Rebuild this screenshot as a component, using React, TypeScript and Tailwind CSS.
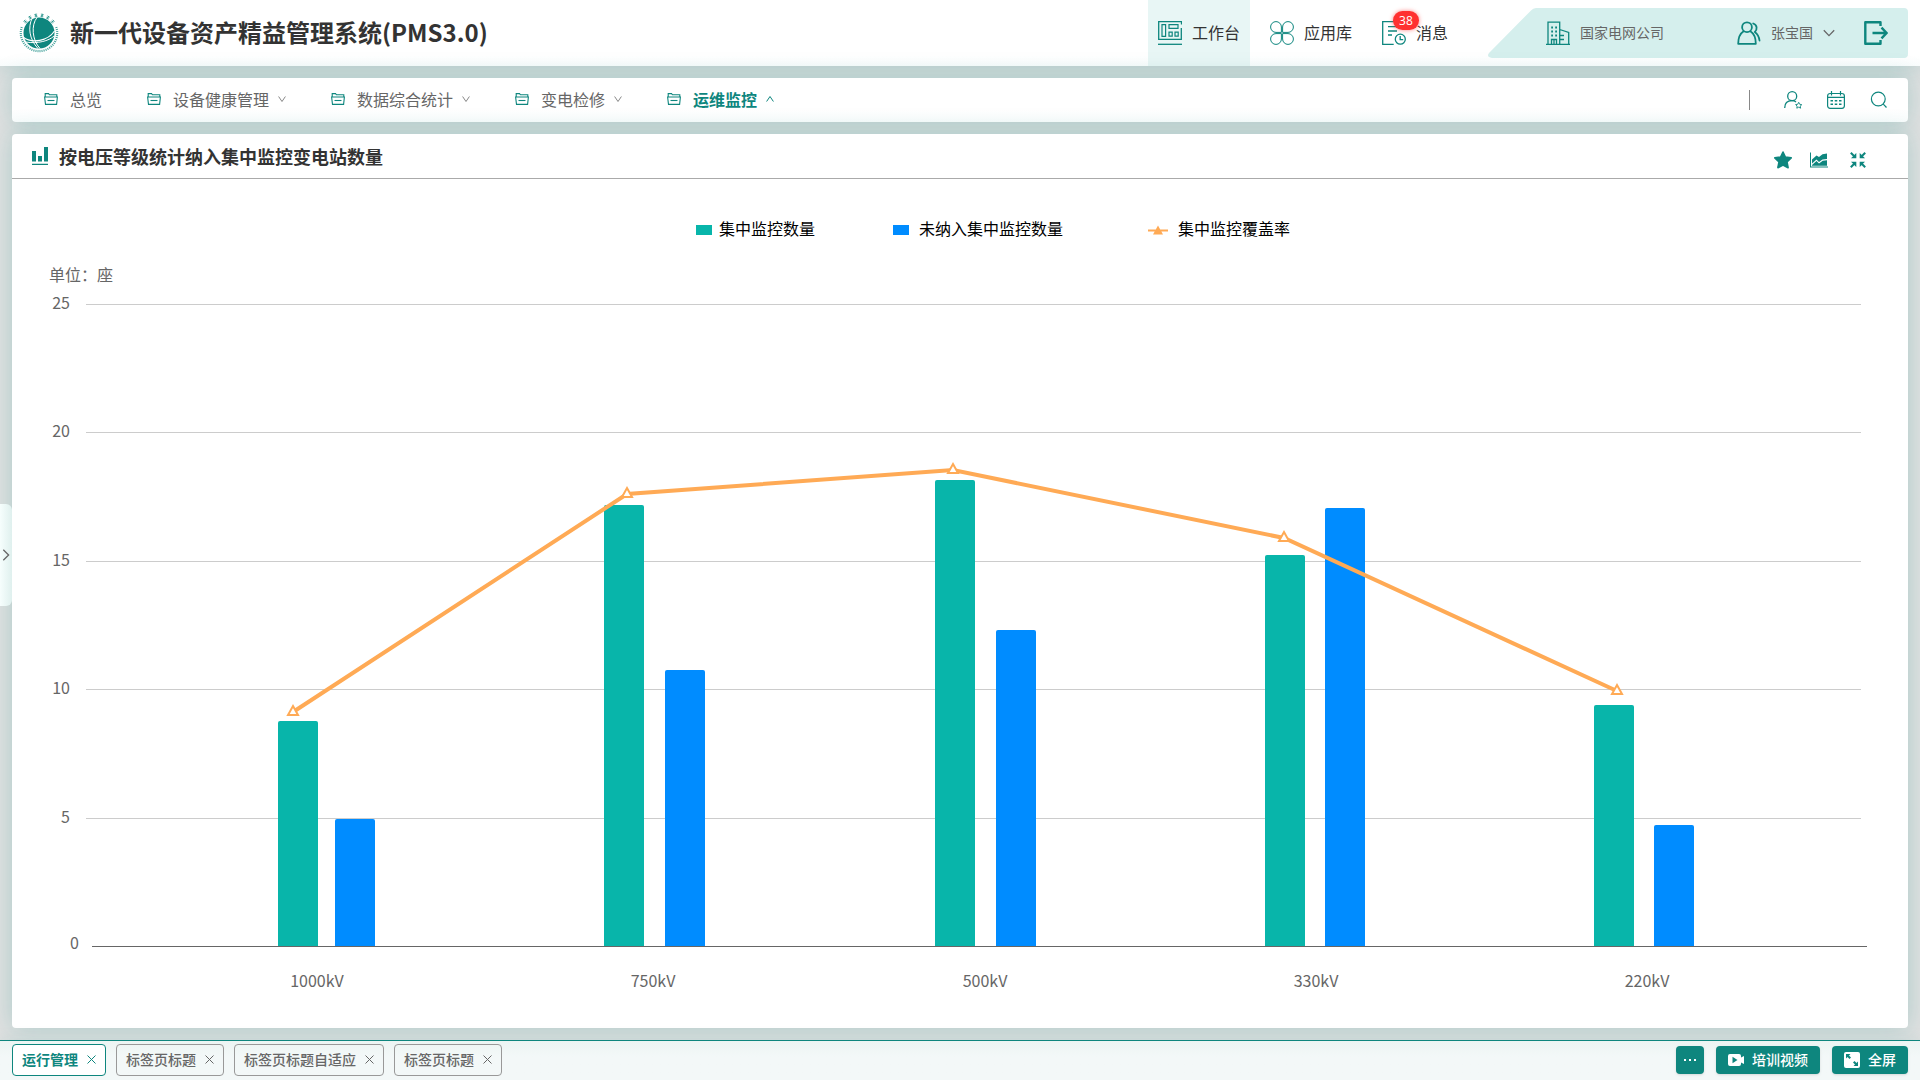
import type { ReactNode } from "react";

const TEAL = "#0e867e";

type IconProps = { className?: string };

function Logo() {
  const spokes = Array.from({ length: 6 }, (_, i) => (i - 2.5) * 20);
  return (
    <svg className="size-10" viewBox="0 0 40 40" fill="none" aria-hidden="true">
      {spokes.map((deg) => (
        <g key={deg} transform={`rotate(${deg} 20 20)`} stroke={TEAL}>
          <path d="M18.6 1h2.8M18.8 2.300h2.400M18.600 3.400h2.800M20 .600v3" strokeWidth="0.600" />
        </g>
      ))}
      <mask id="lower">
        <path d="M0 13L20 20 40 13V40H0Z" fill="#fff" />
      </mask>
      <circle cx="20" cy="20" r="18.200" stroke={TEAL} strokeWidth="2.200" strokeDasharray="1 1" pathLength="110" mask="url(#lower)" opacity="0.750" />
      <circle cx="20" cy="20" r="15.500" fill={TEAL} />
      <path d="M13 5.500C9 14 10 26 19 35.500" stroke="#fff" strokeWidth="1" />
      <path d="M18 4.500C12 12 13 27 21 35.500" stroke="#fff" strokeWidth="1" />
      <path d="M4 24C13 31 29 28 35.500 18" stroke="#fff" strokeWidth="1.100" />
      <path d="M7 29C18 31 30 28 35 23" stroke="#fff" strokeWidth="1" />
    </svg>
  );
}

function WorkbenchIcon() {
  return (
    <svg className="size-6" viewBox="0 0 24 24" fill="none" stroke={TEAL} aria-hidden="true">
      <path d="M23.5 3.5V.7H.7v17.6h22.6V7" strokeWidth="1.3" />
      <path d="M0 23.3h24" strokeWidth="1.3" />
      <path d="M4 3.7h3.6v11.6H4zM11 3.7h9v3.6h-9zM11 11.2h3.2v4H11zM17 11.2h3.2v4H17z" strokeWidth="1.2" />
    </svg>
  );
}

function AppsIcon() {
  return (
    <svg className="size-6" viewBox="0 0 24 24" fill="none" stroke={TEAL} strokeWidth="1" aria-hidden="true">
      <path d="M11.4 11.4H6a5.4 5.4 0 1 1 5.4-5.4ZM12.6 11.4H18A5.4 5.4 0 1 0 12.6 6ZM11.4 12.6H6a5.4 5.4 0 1 0 5.4 5.4ZM12.6 12.6H18a5.4 5.4 0 1 1-5.4 5.4Z" />
    </svg>
  );
}

function MessageIcon() {
  return (
    <svg className="size-6" viewBox="0 0 24 24" fill="none" stroke={TEAL} strokeWidth="1.3" aria-hidden="true">
      <path d="M20.4 8V.7H.7v22.6h11M6 5.7h10M6 10h9M6 14h4" />
      <circle cx="18.3" cy="18.2" r="5" />
      <path d="M18.2 15v3.6h3" />
    </svg>
  );
}

function BuildingIcon() {
  return (
    <svg className="size-6" viewBox="0 0 24 24" fill="none" stroke={TEAL} strokeWidth="1.3" aria-hidden="true">
      <path d="M0 23.3h24M2 23V1.2h11.7V23M13.7 8.5l9 3V23M5.5 23v-4.5h5V23M8 19v4" />
      <path d="M14 14.5h4M14 18.5h4" />
      <path d="M5.2 6.5h1.8M9.2 6.5h1.8M5.2 10.5h1.8M9.2 10.5h1.8M5.2 14.5h1.8M9.2 14.5h1.8" strokeWidth="2" />
    </svg>
  );
}

function UsersIcon() {
  return (
    <svg className="size-6" viewBox="0 0 24 24" fill="none" stroke={TEAL} strokeWidth="1.8" strokeLinecap="round" strokeLinejoin="round" aria-hidden="true">
      <circle cx="10" cy="6.2" r="4.9" />
      <path d="M6.6 10.2C3 12.5 1.2 16 1.2 22.8H18.8C18.8 16 17 12.5 13.4 10.2" />
      <path d="M16.2 2.5C20.5 4 20.4 8.5 17.8 11C20.5 13 22 15.5 22.5 19.5" />
    </svg>
  );
}

function LogoutIcon() {
  return (
    <svg className="size-6" viewBox="0 0 24 24" fill="none" stroke={TEAL} strokeWidth="2.4" aria-hidden="true">
      <path d="M16.5 5V1.3H1.3V22.7H16.500V19" strokeLinejoin="round" />
      <path d="M8.5 12H22.5M17.5 6.7L22.6 12L17.5 17.3" />
    </svg>
  );
}

function Chevron({ className }: IconProps) {
  return (
    <svg className={className} viewBox="0 0 12 8" fill="none" stroke="currentColor" strokeWidth="1.3" aria-hidden="true">
      <path d="M.8 1.3 6 6.6 11.2 1.3" />
    </svg>
  );
}

function ThinChevron({ up }: { up?: boolean }) {
  return (
    <svg className="size-2" viewBox="0 0 8 8" fill="none" stroke={up ? TEAL : "#888"} strokeWidth="1" aria-hidden="true">
      <path d={up ? "M.6 6.5 4 1.5 7.4 6.5" : "M.6 1.5 4 6.5 7.4 1.5"} />
    </svg>
  );
}

function FolderIcon() {
  return (
    <svg className="h-3 w-[14px]" viewBox="0 0 14 12" fill="none" stroke={TEAL} strokeWidth="1.1" aria-hidden="true">
      <path d="M1.2 4V.6H4.5L5.5 1.8H12.8V4" />
      <path d="M.6 4H13.4L12.6 11.4H1.5Z" />
      <path d="M3.5 7.5H10.5" />
    </svg>
  );
}

function UserStarIcon() {
  return (
    <svg className="size-[18px]" viewBox="0 0 18 18" fill="none" stroke={TEAL} strokeWidth="1.3" aria-hidden="true">
      <circle cx="8.2" cy="5.2" r="4.5" />
      <path d="M.7 17C.7 12.5 3 9.7 8 9.7C10 9.7 11.2 10.3 12 11" />
      <path d="m14.7 11.3 1 2 2.100.3-1.500 1.500.3 2.100-1.900-1-1.900 1 .3-2.100-1.500-1.500 2.100-.3Z" strokeWidth="0.9" />
    </svg>
  );
}

function CalendarIcon() {
  return (
    <svg className="size-[18px]" viewBox="0 0 18 18" fill="none" stroke={TEAL} strokeWidth="1.2" aria-hidden="true">
      <rect x=".6" y="2.5" width="16.8" height="14.8" rx="2.5" />
      <path d="M.6 6.3H17.4M4.5 0V4.5M13.5 0V4.5" />
      <path d="M3.5 9.8H14.5M3.5 13.2H14.5" strokeWidth="1.4" strokeDasharray="2.5 1.75" />
    </svg>
  );
}

function SearchIcon() {
  return (
    <svg className="size-[18px]" viewBox="0 0 18 18" fill="none" stroke={TEAL} strokeWidth="1.2" aria-hidden="true">
      <circle cx="8.3" cy="8" r="6.9" />
      <path d="M13.3 13.2 16.5 16.5" />
    </svg>
  );
}

function BarsIcon() {
  return (
    <svg className="size-[18px]" viewBox="0 0 18 18" fill={TEAL} aria-hidden="true">
      <path d="M1 4h4v10.500H1zM7 9h4v5.500H7zM13 0h4v14.500h-4zM1 16.800h16V18H1z" />
    </svg>
  );
}

function StarIcon() {
  return (
    <svg className="size-[18px]" viewBox="0 0 18 18" fill={TEAL} stroke={TEAL} strokeWidth="1.6" strokeLinejoin="round" aria-hidden="true">
      <path d="M9 1 11.4 6 17.2 6.8 13 10.8 14.100 16.700 9 14 3.900 16.700 5 10.800.8 6.800 6.600 6Z" />
    </svg>
  );
}

function AreaIcon() {
  return (
    <svg className="size-[18px]" viewBox="0 0 18 18" fill={TEAL} aria-hidden="true">
      <path d="M0 1.500H1V15.500H18V16.500H0Z" />
      <path d="M2 8.500 6.500 4.500 9 6 12.500 3.300 17 2.500V8L12.500 8.500 9 11 6.500 8.500 2 12.500Z" />
      <path d="M2 14 6.500 10 9 12.500 12.700 9.800 17 9.300V14.800H2Z" />
    </svg>
  );
}

function CompressIcon() {
  return (
    <svg className="size-4" viewBox="0 0 16 16" fill={TEAL} stroke={TEAL} aria-hidden="true">
      {[0, 90, 180, 270].map((deg) => (
        <g key={deg} transform={`rotate(${deg} 8 8)`}>
          <path d="M6.300.800V6.300H.800V4.800L6 .800Z" stroke="none" clipPath="polygon(0 0)" />
          <path d="M6.300 1V6.300H1L2.800 4.500 4.500 2.800Z" stroke="none" />
          <path d="M.800.800 4.500 4.500" strokeWidth="2" />
        </g>
      ))}
    </svg>
  );
}

function VideoIcon() {
  return (
    <svg className="size-4" viewBox="0 0 16 16" aria-hidden="true">
      <path d="M2 2H11a2 2 0 0 1 2 2V5.5L16 4V12L13 10.5V12a2 2 0 0 1-2 2H2a2 2 0 0 1-2-2V4A2 2 0 0 1 2 2Z" fill="#fff" />
      <path d="M4.5 4.8 9.5 8 4.5 11.2Z" fill={TEAL} />
    </svg>
  );
}

function FullscreenIcon() {
  return (
    <svg className="size-4" viewBox="0 0 16 16" aria-hidden="true">
      <rect width="16" height="16" rx="2" fill="#fff" />
      <path d="M2 2H6.500L5 3.500 7 5.500 5.500 7 3.500 5 2 6.500ZM14 14H9.500L11 12.500 9 10.500 10.500 9 12.500 11 14 9.500Z" fill={TEAL} />
    </svg>
  );
}

function HeaderLink({ icon, label, active, badge }: { icon: ReactNode; label: string; active?: boolean; badge?: string }) {
  return (
    <a href="#" className={`flex items-center gap-[10px] px-[10px] text-base text-[#333] ${active ? "bg-[#e8f6f5]" : ""}`}>
      <span className="relative">
        {icon}
        {badge && (
          <span className="absolute -top-[10px] left-[11px] flex h-[19px] w-[26px] items-center justify-center rounded-full bg-[#ff3030] font-['Open_Sans',sans-serif] text-xs text-white shadow-[0_0_4px_rgba(255,48,48,0.6)]">
            {badge}
          </span>
        )}
      </span>
      <span className="pb-0.5">{label}</span>
    </a>
  );
}

function Header() {
  return (
    <header className="relative flex h-[66px] items-stretch bg-white bg-linear-to-b from-white from-85% to-[#fafdfd] pr-3 pl-[19px] shadow-[0_0_24px_rgba(14,134,126,0.25)]">
      <div className="flex items-center gap-[11px]">
        <Logo />
        <h1 className="pb-0.5 text-2xl font-bold text-[#333]">新一代设备资产精益管理系统(PMS3.0)</h1>
      </div>
      <nav className="ml-auto flex gap-[10px]">
        <HeaderLink icon={<WorkbenchIcon />} label="工作台" active />
        <HeaderLink icon={<AppsIcon />} label="应用库" />
        <HeaderLink icon={<MessageIcon />} label="消息" badge="38" />
      </nav>
      <div className="relative my-2 ml-[30px] flex w-[420px] items-center pr-5 pl-[58px] text-sm text-[#666]">
        <svg className="absolute inset-0 size-full" viewBox="0 0 420 50" preserveAspectRatio="none" fill="#d5efed" aria-hidden="true">
          <path d="M48 0H416a4 4 0 0 1 4 4V46a4 4 0 0 1-4 4H4Q-2 49 1 45L43 2.5Q45 0 48 0Z" />
        </svg>
        <a href="#" className="relative flex items-center gap-[10px]">
          <BuildingIcon />
          <span className="pb-0.5">国家电网公司</span>
        </a>
        <button type="button" className="relative ml-auto flex items-center gap-[10px]">
          <UsersIcon />
          <span className="pb-0.5">张宝国</span>
          <Chevron className="h-2 w-3" />
        </button>
        <button type="button" aria-label="退出" className="relative ml-[29px]">
          <LogoutIcon />
        </button>
      </div>
    </header>
  );
}

const menu = [
  { label: "总览", expandable: false, active: false },
  { label: "设备健康管理", expandable: true, active: false },
  { label: "数据综合统计", expandable: true, active: false },
  { label: "变电检修", expandable: true, active: false },
  { label: "运维监控", expandable: true, active: true },
];

function MenuBar() {
  return (
    <nav className="relative flex h-11 items-center justify-between rounded bg-white bg-linear-to-b from-white from-70% to-[#fafdfd] pr-5 pl-8 shadow-[0_0_24px_rgba(14,134,126,0.25)]">
      <ul className="flex gap-[45px] pb-0.5">
        {menu.map((item) => (
          <li key={item.label}>
            <a href="#" className={`flex items-center text-base ${item.active ? "font-bold text-[#0e867e]" : "text-[#666]"}`}>
              <FolderIcon />
              <span className="ml-3">{item.label}</span>
              {item.expandable && (
                <span className="ml-[9px]">
                  <ThinChevron up={item.active} />
                </span>
              )}
            </a>
          </li>
        ))}
      </ul>
      <div className="flex items-center gap-[25px]">
        <span className="mr-[9px] h-5 w-px bg-[#888]" />
        <button type="button" aria-label="用户收藏"><UserStarIcon /></button>
        <button type="button" aria-label="日历"><CalendarIcon /></button>
        <button type="button" aria-label="搜索"><SearchIcon /></button>
      </div>
    </nav>
  );
}

const BASE = 767;
const rows = [
  { value: 25, y: 125 },
  { value: 20, y: 253 },
  { value: 15, y: 382 },
  { value: 10, y: 510 },
  { value: 5, y: 639 },
];
const groups = [
  { label: "1000kV", center: 305, green: [266, 542], blue: [323, 640] },
  { label: "750kV", center: 641, green: [592, 326], blue: [653, 491] },
  { label: "500kV", center: 973, green: [923, 301], blue: [984, 451] },
  { label: "330kV", center: 1304, green: [1253, 376], blue: [1313, 329] },
  { label: "220kV", center: 1635, green: [1582, 526], blue: [1642, 646] },
];
const coverage = [
  [281, 533],
  [615, 315],
  [941, 291],
  [1272, 359],
  [1605, 512],
];

function bar(x: number, y: number) {
  return `M${x} ${BASE}V${y + 2}q0-2 2-2h36q2 0 2 2V${BASE}Z`;
}

function Chart() {
  return (
    <svg className="block h-auto w-full" viewBox="0 0 1896 849" role="img" aria-label="按电压等级统计纳入集中监控变电站数量">
      <g fill="#666" fontSize="16">
        <text x="37" y="102">单位：座</text>
        {rows.map((row) => (
          <text key={row.value} x="58" y={row.y + 5} textAnchor="end">{row.value}</text>
        ))}
        <text x="67" y="770" textAnchor="end">0</text>
        {groups.map((g) => (
          <text key={g.label} x={g.center} y="808" textAnchor="middle">{g.label}</text>
        ))}
      </g>
      {rows.map((row) => (
        <rect key={row.value} x="74" y={row.y} width="1775" height="1" fill="#ccc" />
      ))}
      {groups.map((g) => (
        <g key={g.label}>
          <path d={bar(g.green[0], g.green[1])} fill="#08b5aa" />
          <path d={bar(g.blue[0], g.blue[1])} fill="#008cff" />
        </g>
      ))}
      <rect x="80" y={BASE} width="1775" height="1" fill="#666" />
      <polyline points={coverage.map((p) => p.join(",")).join(" ")} fill="none" stroke="#ffaa55" strokeWidth="4" />
      {coverage.map(([x, y]) => (
        <path key={x} d={`M${x} ${y - 6}l5 9h-10Z`} fill="#fff" stroke="#ffaa55" strokeWidth="2" />
      ))}
    </svg>
  );
}

function Legend() {
  return (
    <ul className="absolute inset-x-0 top-[37px] flex justify-center pl-[66px] text-base text-black">
      <li className="mr-[78px] flex items-center gap-[7px]">
        <span className="h-[10px] w-4 bg-[#08b5aa]" />
        <span className="pb-1">集中监控数量</span>
      </li>
      <li className="mr-[85px] flex items-center gap-[10px]">
        <span className="h-[10px] w-4 bg-[#008cff]" />
        <span className="pb-1">未纳入集中监控数量</span>
      </li>
      <li className="flex items-center gap-[10px]">
        <svg className="h-[10px] w-5" viewBox="0 0 20 10" fill="#ffaa55" aria-hidden="true">
          <path d="M0 4.500H20V6.500H0ZM10 .500 15 9.500H5Z" />
        </svg>
        <span className="pb-1">集中监控覆盖率</span>
      </li>
    </ul>
  );
}

function ChartCard() {
  return (
    <section className="relative rounded bg-white shadow-[0_0_24px_rgba(14,134,126,0.25)]">
      <div className="flex h-[45px] items-center border-b border-[#aaa] pr-[42px] pl-[19px]">
        <BarsIcon />
        <h2 className="ml-[10px] text-lg font-bold text-[#333]">按电压等级统计纳入集中监控变电站数量</h2>
        <div className="ml-auto flex items-center gap-[18px] pt-2">
          <button type="button" aria-label="收藏"><StarIcon /></button>
          <button type="button" aria-label="图表"><AreaIcon /></button>
          <button type="button" aria-label="收起" className="ml-1"><CompressIcon /></button>
        </div>
      </div>
      <div className="relative">
        <Chart />
        <Legend />
      </div>
    </section>
  );
}

const tabs = [
  { label: "运行管理", active: true },
  { label: "标签页标题", active: false },
  { label: "标签页标题自适应", active: false },
  { label: "标签页标题", active: false },
];

function Footer() {
  return (
    <footer className="relative flex h-10 items-center justify-between border-t border-[#0e867e] bg-linear-to-b from-[#ecf5f3] to-[#f3f8f8] to-40% px-3 pb-0.5 shadow-[0_0_16px_rgba(14,134,126,0.1)]">
      <div className="flex gap-[10px]">
        {tabs.map((tab, i) => (
          <div
            key={i}
            className={`flex h-8 items-center gap-[9px] rounded border px-[9px] text-sm ${
              tab.active ? "border-[#0e867e] bg-white font-bold text-[#0e867e]" : "border-[#999] font-medium text-[#666]"
            }`}
          >
            <a href="#" className="pb-0.5">{tab.label}</a>
            <button type="button" aria-label={`关闭${tab.label}`}>
              <svg className="size-[9px]" viewBox="0 0 9 9" stroke="currentColor" strokeWidth="1" aria-hidden="true">
                <path d="M.5.5 8.5 8.5M8.5.5.5 8.5" />
              </svg>
            </button>
          </div>
        ))}
      </div>
      <div className="flex gap-3 text-sm font-medium text-white">
        <button type="button" aria-label="更多" className="flex size-7 items-center justify-center rounded bg-[#0e867e] shadow">
          <svg className="h-[2px] w-3" viewBox="0 0 12 2" fill="#fff" aria-hidden="true">
            <path d="M0 0h2v2H0zM5 0h2v2H5zM10 0h2v2h-2z" />
          </svg>
        </button>
        <button type="button" className="flex h-7 items-center gap-2 rounded bg-[#0e867e] px-3 shadow">
          <VideoIcon />
          <span className="pb-0.5">培训视频</span>
        </button>
        <button type="button" className="flex h-7 items-center gap-2 rounded bg-[#0e867e] px-3 shadow">
          <FullscreenIcon />
          <span className="pb-0.5">全屏</span>
        </button>
      </div>
    </footer>
  );
}

export default function App() {
  return (
    <div className="relative flex min-h-screen flex-col overflow-hidden bg-[#e0e1e1] font-['Noto_Sans_CJK_SC',sans-serif]">
      <Header />
      <main className="flex flex-1 flex-col gap-3 p-3">
        <MenuBar />
        <ChartCard />
      </main>
      <Footer />
      <button type="button" aria-label="展开侧栏" className="absolute top-[504px] left-0 flex h-[102px] w-3 items-center justify-center rounded-r-md bg-linear-to-r from-[#f6fefd] to-[#dff0ee] text-[#666]">
        <Chevron className="h-2 w-3 -rotate-90" />
      </button>
    </div>
  );
}
